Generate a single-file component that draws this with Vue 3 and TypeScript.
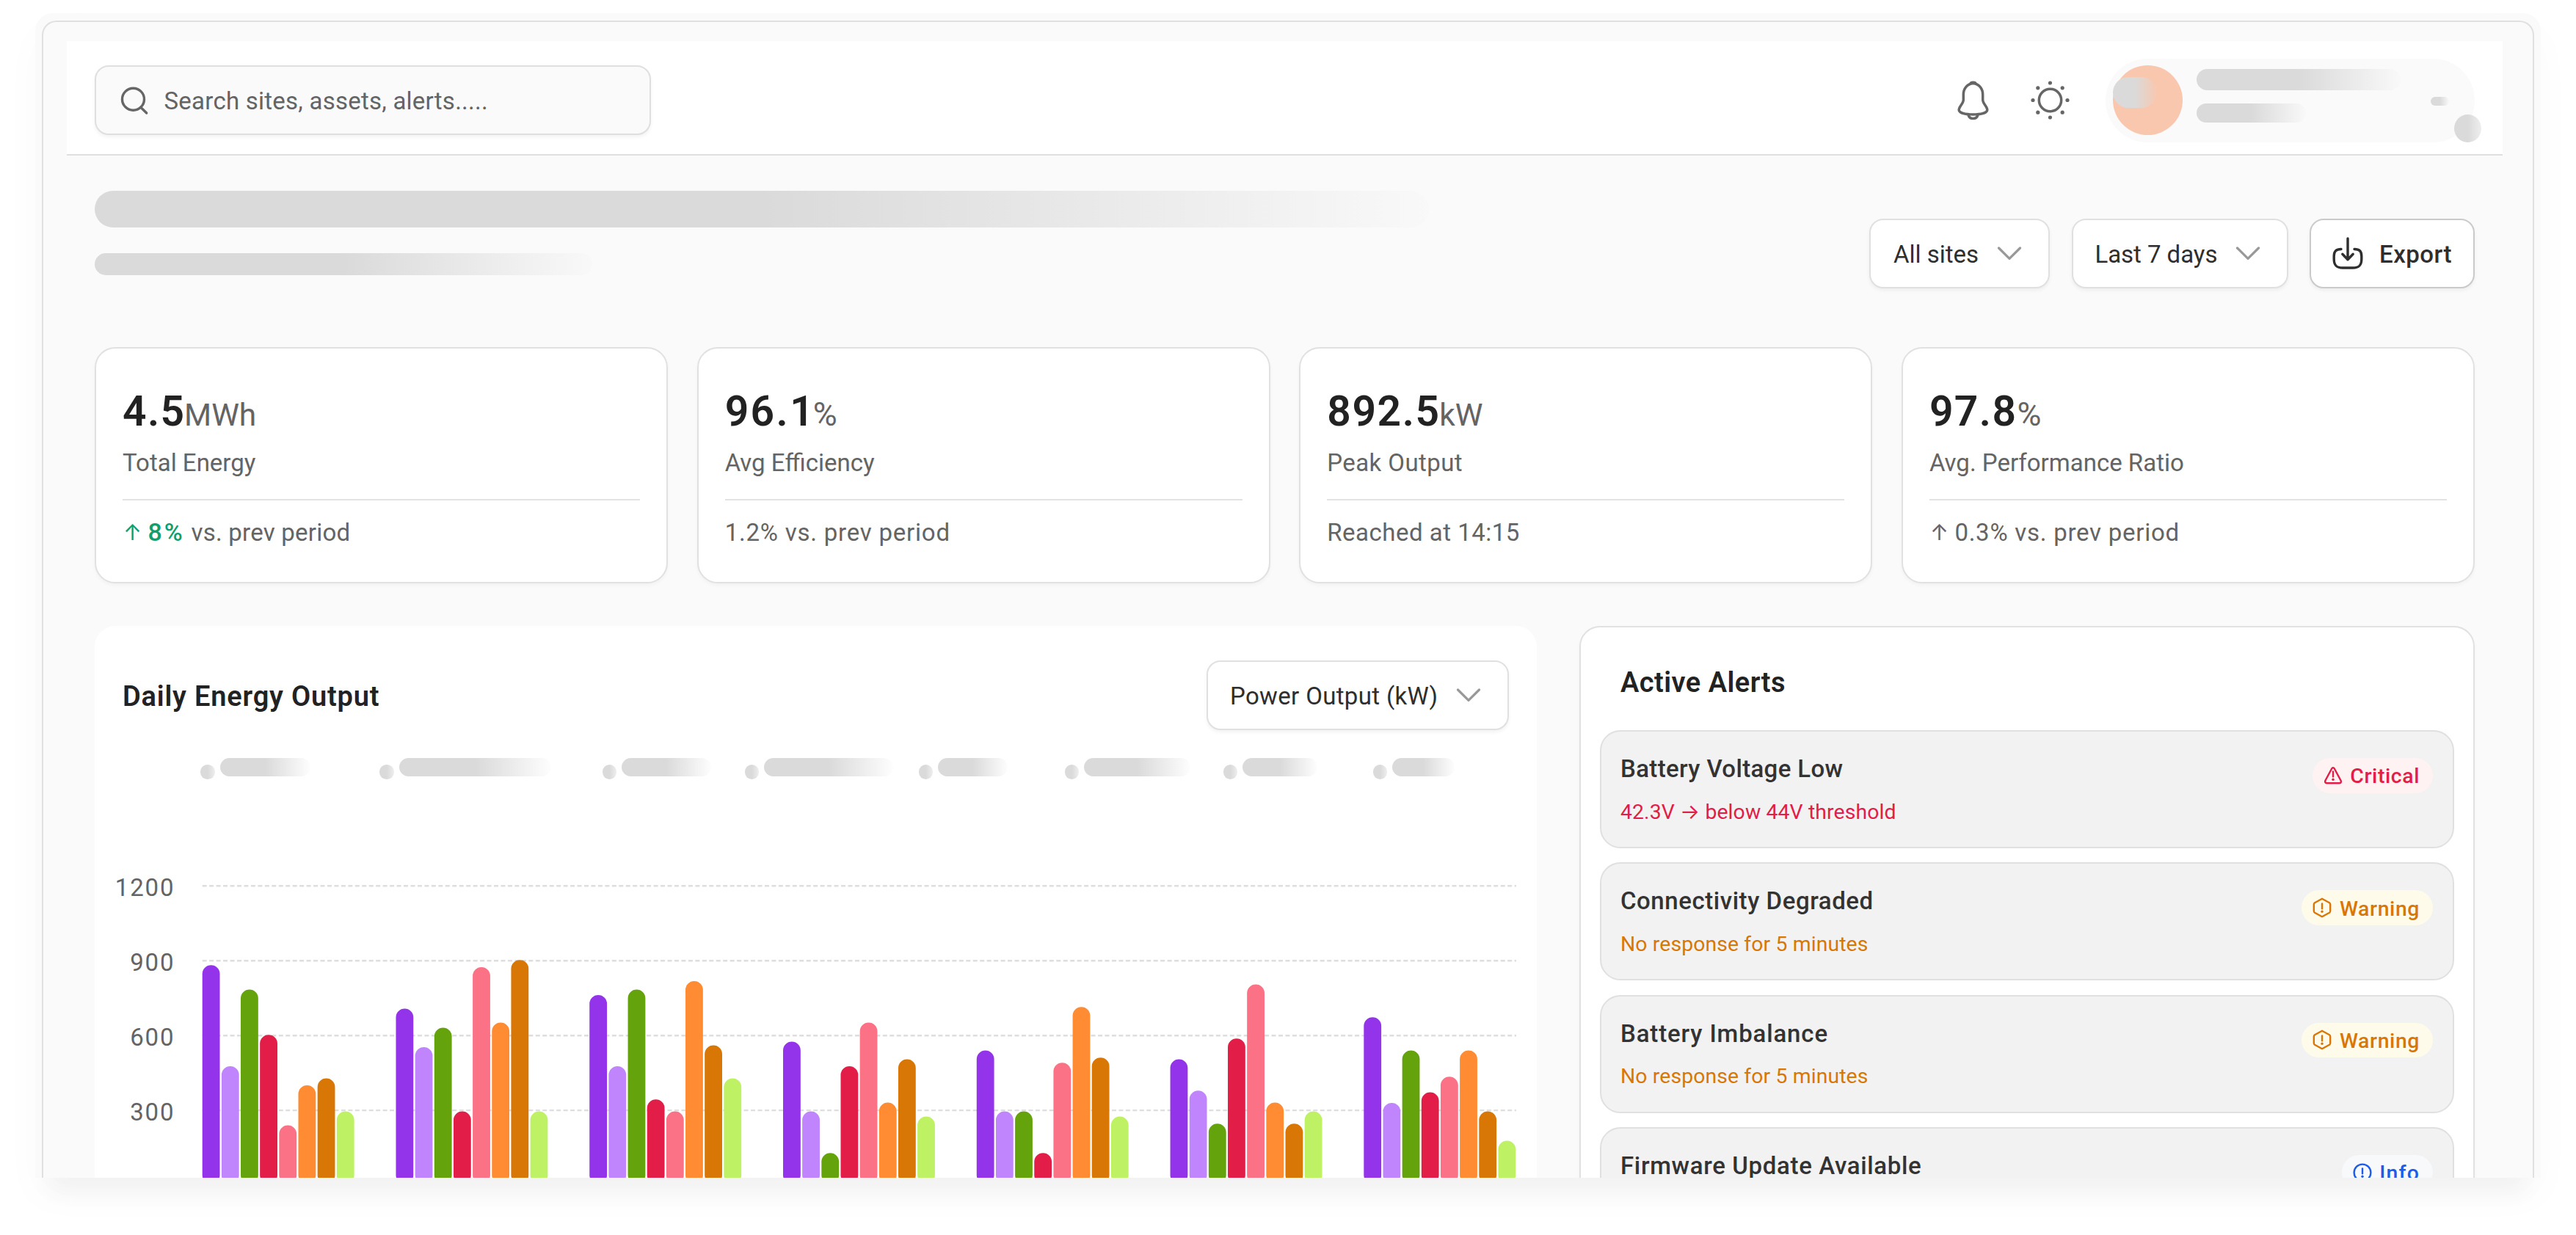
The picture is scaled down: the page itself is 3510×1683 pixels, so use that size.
<script setup lang="ts">
interface Stat {
  value: string
  valueSpacing: number
  unit: string
  unitShift: number
  label: string
  labelSpacing: number
  arrow?: 'up' | 'gain'
  gain?: string
  note: string
  noteSpacing: number
}

const stats: Stat[] = [
  { value: '4.5', valueSpacing: 1.4, unit: 'MWh', unitShift: -1.5, label: 'Total Energy', labelSpacing: 0, arrow: 'gain', gain: '8%', note: 'vs. prev period', noteSpacing: 0.23 },
  { value: '96.1', valueSpacing: 2.4, unit: '%', unitShift: -3.5, label: 'Avg Efficiency', labelSpacing: 0, note: '1.2% vs. prev period', noteSpacing: 0.78 },
  { value: '892.5', valueSpacing: 1.6, unit: 'kW', unitShift: -1.5, label: 'Peak Output', labelSpacing: 0.42, note: 'Reached at 14:15', noteSpacing: 0.5 },
  { value: '97.8', valueSpacing: 1.4, unit: '%', unitShift: 0, label: 'Avg. Performance Ratio', labelSpacing: 0, arrow: 'up', note: '0.3% vs. prev period', noteSpacing: 0.75 },
]

type Level = 'critical' | 'warning' | 'info'

interface Alert {
  title: string
  titleSpacing: number
  detail?: string
  level: Level
  tag: string
}

const alerts: Alert[] = [
  { title: 'Battery Voltage Low', titleSpacing: 0.35, detail: '42.3V → below 44V threshold', level: 'critical', tag: 'Critical' },
  { title: 'Connectivity Degraded', titleSpacing: 0.55, detail: 'No response for 5 minutes', level: 'warning', tag: 'Warning' },
  { title: 'Battery Imbalance', titleSpacing: 0.85, detail: 'No response for 5 minutes', level: 'warning', tag: 'Warning' },
  { title: 'Firmware Update Available', titleSpacing: 0.65, level: 'info', tag: 'Info' },
]

// Legend placeholders: slot width and pill width
const legend = [
  { slot: 244, pill: 123.5 },
  { slot: 303.8, pill: 207.6 },
  { slot: 194.2, pill: 121.3 },
  { slot: 237, pill: 175.2 },
  { slot: 198.8, pill: 95 },
  { slot: 216, pill: 144.6 },
  { slot: 204.2, pill: 101.5 },
  { slot: 111, pill: 85 },
]

const colors = ['#9333ea', '#c084fc', '#65a30d', '#e11d48', '#fb7185', '#ff8b33', '#d97706', '#bef264']

// Bar heights in chart pixels, one row per day
const days = [
  [298, 160.3, 264.7, 203, 79.7, 134.3, 143.7, 98.7],
  [238.7, 186.3, 212.7, 98.7, 295.3, 219.7, 305, 98.7],
  [257.3, 160.3, 264.7, 115, 98.7, 276.3, 188.7, 143.7],
  [193.7, 98.7, 42, 160.3, 219.7, 110.7, 169.7, 91.7],
  [181.7, 98.7, 98.7, 42, 165, 241, 172, 91.7],
  [169.7, 127, 82, 198, 271.7, 110.7, 82, 98.7],
  [227, 110.3, 181.7, 124.7, 146, 181.7, 98.7, 58.7],
]

const baseY = 423.3
const bars = days.flatMap((row, d) =>
  row.map((h, i) => ({
    x: 146.7 + d * 263.77 + i * 26.16,
    y: baseY - h,
    h,
    fill: colors[i],
  })),
)

const ticks = [1200, 900, 600, 300, 0].map((value, i) => ({ value, y: 17.3 + i * 101.95 }))
</script>

<template>
  <div class="stage">
    <div class="shell">
      <div class="window">
        <header class="topbar">
          <div class="search">
            <svg class="search-icon" width="42" height="42" viewBox="0 0 42 42">
              <circle cx="19.5" cy="19.2" r="15" />
              <path d="M30 30.5 37.7 38" />
            </svg>
            <span class="search-text">Search sites, assets, alerts.....</span>
          </div>
          <div class="actions">
            <svg class="line-icon" width="57" height="57" viewBox="0 0 57 57">
              <path d="M28.5 5.6C20 6.6 15.3 13 15.3 21V28C15.3 33.5 9.2 37 9.2 41.5C9.2 46 18 48 28.5 48S47.8 46 47.8 41.5C47.8 37 41.7 33.5 41.7 28V21C41.7 13 37 6.6 28.5 5.6Z" />
              <path d="M24.5 6.6C25.5 3.6 31.5 3.6 32.5 6.6" />
              <path d="M21.8 48C22.8 52 25 53.6 28.5 53.6S34.2 52 35.2 48" />
            </svg>
            <svg class="line-icon" width="57" height="57" viewBox="0 0 57 57">
              <circle cx="28.5" cy="28.5" r="15.2" />
              <g class="dots">
                <circle cx="28.5" cy="5" r="2.6" />
                <circle cx="28.5" cy="52" r="2.6" />
                <circle cx="5" cy="28.5" r="2.6" />
                <circle cx="52" cy="28.5" r="2.6" />
                <circle cx="11.8" cy="11.8" r="2.6" />
                <circle cx="45.2" cy="11.8" r="2.6" />
                <circle cx="11.8" cy="45.2" r="2.6" />
                <circle cx="45.2" cy="45.2" r="2.6" />
              </g>
            </svg>
            <div class="profile">
              <div class="avatar"><span class="fade avatar-fade"></span></div>
              <div class="profile-lines">
                <span class="fade line-name"></span>
                <span class="fade line-role"></span>
              </div>
              <span class="fade profile-caret"></span>
              <span class="fade profile-dot"></span>
            </div>
          </div>
        </header>

        <main class="content">
          <section class="intro">
            <div class="intro-lines">
              <span class="fade line-title"></span>
              <span class="fade line-sub"></span>
            </div>
            <div class="toolbar">
              <button class="select all-sites">
                <span>All sites</span>
                <svg class="chevron" width="34" height="20" viewBox="0 0 34 20"><path d="M2.5 3 17 17.3 31.5 3" /></svg>
              </button>
              <button class="select period">
                <span>Last 7 days</span>
                <svg class="chevron" width="34" height="20" viewBox="0 0 34 20"><path d="M2.5 3 17 17.3 31.5 3" /></svg>
              </button>
              <button class="select export">
                <svg class="export-icon" width="44" height="46" viewBox="0 0 44 46">
                  <path d="M13 17.5C6 17.5 3.2 20.5 3.2 27V31C3.2 40 7 43 15 43H29C37 43 40.8 40 40.8 31V27C40.8 20.5 38 17.5 31 17.5" />
                  <path d="M22 3V31M14.8 24.3 22 31.8 29.2 24.3" />
                </svg>
                <span>Export</span>
              </button>
            </div>
          </section>

          <section class="stats">
            <article v-for="s in stats" :key="s.label" class="card stat">
              <div class="figure">
                <span class="value" :style="{ letterSpacing: s.valueSpacing + 'px' }">{{ s.value }}</span>
                <span class="unit" :class="{ percent: s.unit === '%' }" :style="{ marginLeft: s.unitShift + 'px' }">{{ s.unit }}</span>
              </div>
              <div class="label" :style="{ letterSpacing: s.labelSpacing + 'px' }">{{ s.label }}</div>
              <div class="note">
                <span v-if="s.arrow" class="arrow" :class="s.arrow">↑</span>
                <span v-if="s.gain" class="gain-value">{{ s.gain }}</span>
                <span :style="{ letterSpacing: s.noteSpacing + 'px' }">{{ s.note }}</span>
              </div>
            </article>
          </section>

          <section class="panels">
            <article class="chart-panel">
              <div class="chart-head">
                <h2 class="chart-title">Daily Energy Output</h2>
                <button class="select metric">
                  <span>Power Output (kW)</span>
                  <svg class="chevron" width="34" height="20" viewBox="0 0 34 20"><path d="M2.5 3 17 17.3 31.5 3" /></svg>
                </button>
              </div>
              <div class="legend">
                <div v-for="(l, i) in legend" :key="i" class="legend-item" :style="{ width: l.slot + 'px' }">
                  <span class="fade legend-dot"></span>
                  <span class="fade legend-pill" :style="{ width: l.pill + 'px' }"></span>
                </div>
              </div>
              <svg class="chart" width="1965" height="450" viewBox="0 0 1965 450">
                <g class="grid">
                  <line v-for="t in ticks.slice(0, 4)" :key="t.value" x1="146.7" x2="1937" :y1="t.y" :y2="t.y" />
                </g>
                <g class="axis">
                  <text v-for="t in ticks" :key="t.value" x="109.5" :y="t.y + 13.4">{{ t.value }}</text>
                </g>
                <rect v-for="(b, i) in bars" :key="i" :x="b.x" :y="b.y" width="23.8" :height="b.h" rx="11.9" :fill="b.fill" />
              </svg>
            </article>

            <article class="card alerts">
              <h2 class="alerts-title">Active Alerts</h2>
              <div v-for="a in alerts" :key="a.title" class="alert" :class="a.level">
                <div class="alert-text">
                  <div class="alert-name" :style="{ letterSpacing: a.titleSpacing + 'px' }">{{ a.title }}</div>
                  <div v-if="a.detail" class="alert-detail">{{ a.detail }}</div>
                </div>
                <div class="badge">
                  <svg width="28" height="28" viewBox="0 0 28 28">
                    <path v-if="a.level === 'critical'" d="M12.3 4.2C13 2.9 15 2.9 15.7 4.2L24.6 20.8C25.4 22.6 24.6 24.2 22.7 24.2H5.3C3.4 24.2 2.6 22.6 3.4 20.8Z" />
                    <path v-else-if="a.level === 'warning'" d="M14 1.8 24 7.2Q25.2 8 25.2 9.4V18.6Q25.2 20 24 20.8L14 26.2 4 20.8Q2.8 20 2.8 18.6V9.4Q2.8 8 4 7.2Z" />
                    <circle v-else cx="14" cy="14" r="11.4" />
                    <path d="M14 8.5V15.2" />
                    <circle class="mark" cx="14" cy="19.2" r="1.7" />
                  </svg>
                  <span>{{ a.tag }}</span>
                </div>
              </div>
            </article>
          </section>
        </main>
      </div>
    </div>
  </div>
</template>

<style>
body {
  background: #fff;
}
</style>

<style scoped>
.stage {
  box-sizing: border-box;
  width: 3510px;
  height: 1683px;
  padding: 18px 48px 0;
  overflow: hidden;
  background: #fff;
  color: #2e2e2e;
  font-family: Roboto, Inter, 'Liberation Sans', sans-serif;
  font-size: 33px;
}
.stage *,
.stage *::before {
  box-sizing: border-box;
}
.shell {
  height: 1587px;
  padding: 10px 9px 0 9px;
  background: #fafafa;
  border-radius: 24px 24px 0 0;
  box-shadow:
    0 40px 30px -18px rgba(0, 0, 0, 0.035),
    0 26px 56px rgba(0, 0, 0, 0.024);
}
.window {
  height: 1577px;
  padding: 26px 0 0;
  border: 2px solid #e0e0e0;
  border-bottom: 0;
  border-radius: 20px 20px 0 0;
  background: #fafafa;
  overflow: hidden;
}
.fade {
  display: block;
  flex: none;
  background: linear-gradient(90deg, #dadada 50%, rgba(218, 218, 218, 0.04) 100%);
}

/* top bar */
.topbar {
  display: flex;
  align-items: center;
  justify-content: space-between;
  height: 156px;
  margin: 0 41px 0 32px;
  padding: 7px 38px 0;
  background: #fff;
  border-bottom: 2px solid #dfdfdf;
}
.search {
  display: flex;
  align-items: center;
  width: 758px;
  height: 95px;
  padding: 0 31px;
  gap: 19.5px;
  border: 2px solid #dfdfdf;
  border-radius: 19px;
  background: #fafafa;
  box-shadow: 0 3px 5px rgba(0, 0, 0, 0.05);
}
.search-icon {
  fill: none;
  stroke: #666;
  stroke-width: 3.4;
  stroke-linecap: round;
}
.search-text {
  padding-top: 2px;
  color: #646464;
  letter-spacing: 0.24px;
}
.search-text,
.select span {
  white-space: nowrap;
}
.actions {
  display: flex;
  align-items: center;
  gap: 47.5px;
}
.line-icon {
  fill: none;
  stroke: #666;
  stroke-width: 3.5;
  stroke-linejoin: round;
}
.dots {
  fill: #666;
  stroke: none;
}
.profile {
  position: relative;
  display: flex;
  width: 503px;
  height: 114px;
  padding: 9px 35px 0 10px;
  border-radius: 57px;
  background: #fafafa;
}
.avatar {
  flex: none;
  width: 95px;
  height: 95px;
  border-radius: 50%;
  background: #f9c7ae;
}
.avatar-fade {
  width: 60px;
  height: 42px;
  margin-top: 16px;
  border-radius: 21px;
}
.profile-lines {
  flex: 1;
  margin: 5px 0 0 19px;
}
.line-name {
  width: 278px;
  height: 29px;
  border-radius: 15px;
}
.line-role {
  width: 149px;
  height: 26px;
  margin-top: 18px;
  border-radius: 13px;
}
.profile-caret {
  width: 25px;
  height: 12px;
  margin-top: 43px;
  border-radius: 6px;
}
.profile-dot {
  position: absolute;
  right: -9px;
  bottom: 0;
  width: 37px;
  height: 38px;
  border-radius: 50%;
  background: linear-gradient(90deg, #dadada 50%, #eeeeee 100%);
}

/* page intro */
.content {
  padding: 48px 79px 0 70px;
}
.intro {
  display: flex;
  justify-content: space-between;
  height: 213px;
}
.line-title {
  width: 1818px;
  height: 50px;
  border-radius: 25px;
}
.line-sub {
  width: 678px;
  height: 29.5px;
  margin-top: 35px;
  border-radius: 15px;
}
.toolbar {
  display: flex;
  align-items: flex-start;
  gap: 29.5px;
  padding-top: 38px;
}
.select {
  display: flex;
  align-items: center;
  justify-content: space-between;
  height: 94.5px;
  margin: 0;
  padding: 0 36px 0 30px;
  border: 2px solid #e0e0e0;
  border-radius: 19px;
  background: #fff;
  box-shadow: 0 3px 5px rgba(0, 0, 0, 0.05);
  color: #2e2e2e;
  font: inherit;
}
.select span {
  padding-top: 2px;
}
.chevron {
  fill: none;
  stroke: #999;
  stroke-width: 3.3;
  stroke-linecap: round;
  stroke-linejoin: round;
}
.all-sites {
  width: 246px;
  padding-left: 31px;
}
.period {
  width: 295px;
  letter-spacing: -0.05px;
}
.export {
  justify-content: flex-start;
  width: 225px;
  gap: 21px;
  padding: 0 0 0 28px;
  border-color: #cacaca;
  font-weight: 500;
  letter-spacing: 0.5px;
}
.export-icon {
  fill: none;
  stroke: #2e2e2e;
  stroke-width: 3.4;
  stroke-linecap: round;
  stroke-linejoin: round;
}

/* stat cards */
.stats {
  display: grid;
  grid-template-columns: repeat(4, 1fr);
  gap: 39.5px;
}
.card {
  border: 2px solid #e1e1e1;
  border-radius: 28px;
  background: #fff;
  box-shadow: 0 3px 5px rgba(0, 0, 0, 0.035);
}
.stat {
  height: 322px;
  padding: 53px 36px 0;
  white-space: nowrap;
}
.figure {
  display: flex;
  align-items: baseline;
  height: 66px;
}
.value {
  color: #222;
  font-size: 57px;
  font-weight: 600;
  line-height: 66px;
}
.unit {
  color: #646464;
  font-size: 42.5px;
  line-height: 1;
}
.unit.percent {
  font-size: 45px;
}
.label {
  margin-top: 13px;
  padding-bottom: 26px;
  border-bottom: 2px solid #e2e2e2;
  color: #646464;
  line-height: 47px;
}
.note {
  display: flex;
  margin-top: 20px;
  color: #646464;
  line-height: 47px;
}
.arrow {
  width: 34.5px;
  padding-left: 1px;
  font-family: Inter, sans-serif;
  font-size: 30px;
}
.gain,
.gain-value {
  color: #0f9f6e;
}
.gain-value {
  width: 59px;
  font-size: 34px;
  font-weight: 500;
  letter-spacing: 3px;
}

/* panels */
.panels {
  display: grid;
  grid-template-columns: 1965px 1fr;
  align-items: start;
  gap: 58px;
  margin-top: 58px;
}
.chart-panel {
  height: 800px;
  padding-top: 47px;
  border-radius: 28px;
  background: #fff;
}
.chart-head {
  display: flex;
  align-items: center;
  justify-content: space-between;
  padding: 0 38px 0 38px;
}
.chart-title,
.alerts-title {
  margin: 0;
  color: #222;
  font-size: 38px;
  font-weight: 600;
}
.chart-title {
  padding-top: 3px;
  letter-spacing: 0.8px;
}
.metric {
  width: 412px;
  letter-spacing: 0.34px;
}
.legend {
  display: flex;
  height: 30px;
  margin: 38px 0 0 144px;
}
.legend-item {
  display: flex;
  flex: none;
  gap: 7px;
}
.legend-dot {
  width: 19.5px;
  height: 19.5px;
  margin-top: 9.5px;
  border-radius: 50%;
  background: linear-gradient(90deg, #dadada 50%, #eeeeee 100%);
}
.legend-pill {
  height: 25.5px;
  border-radius: 13px;
}
.chart {
  display: block;
  margin-top: 127.5px;
}
.grid line {
  stroke: #dedede;
  stroke-width: 2.4;
  stroke-dasharray: 6 3.46;
}
.axis text {
  fill: #646464;
  font-size: 33px;
  letter-spacing: 1.9px;
  text-anchor: end;
}

/* alerts */
.alerts {
  display: flex;
  flex-direction: column;
  gap: 19.2px;
  height: 800px;
  padding: 50px 26px 0;
}
.alerts-title {
  margin-bottom: 21px;
  padding-left: 28px;
  letter-spacing: 0.45px;
  line-height: 50px;
}
.alert {
  display: flex;
  flex: none;
  align-items: flex-start;
  justify-content: space-between;
  height: 161px;
  padding: 28px 27px 0 26px;
  border: 2px solid #e0e0e0;
  border-radius: 28px;
  background: #f2f2f2;
  white-space: nowrap;
}
.alert-name {
  color: #333;
  font-weight: 500;
  line-height: 46px;
}
.alert-detail {
  margin-top: 15.5px;
  font-size: 28.4px;
  letter-spacing: 0.1px;
  line-height: 40px;
}
.badge {
  display: flex;
  align-items: center;
  height: 47.5px;
  margin-top: 8px;
  padding: 0 18px 0 14px;
  gap: 9.5px;
  border-radius: 24px;
  font-size: 28.4px;
  font-weight: 500;
  letter-spacing: 0.6px;
}
.badge span {
  padding-top: 2px;
}
.badge svg {
  fill: none;
  stroke: currentColor;
  stroke-width: 2.4;
  stroke-linecap: round;
  stroke-linejoin: round;
}
.badge .mark {
  fill: currentColor;
  stroke: none;
}
.critical .alert-detail,
.critical .badge {
  color: #e11d48;
}
.critical .badge {
  background: #fef2f2;
}
.warning .alert-detail,
.warning .badge {
  color: #d97706;
}
.warning .badge {
  padding-left: 14.5px;
  background: #fffbeb;
}
.info .badge {
  color: #1d5ce8;
  background: #f8f9fb;
}
.info .badge {
  letter-spacing: 1.2px;
}
</style>
